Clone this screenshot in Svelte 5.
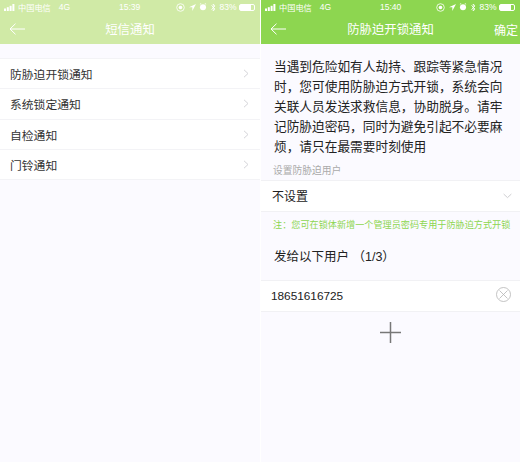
<script>
  const notices = ["防胁迫开锁通知", "系统锁定通知", "自检通知", "门铃通知"];
</script>

{#snippet status(time)}
  <div class="status">
    <div class="status-side">
      <svg width="11" height="7" viewBox="0 0 11 7" fill="#fff"><rect x="0" y="4.500" width="2" height="2.500" /><rect x="2.800" y="3.200" width="2" height="3.800" /><rect x="5.600" y="1.800" width="2" height="5.200" /><rect x="8.400" y="0" width="2" height="7" /></svg>
      <span class="carrier">中国电信</span>
      <span class="net">4G</span>
    </div>
    <span class="time">{time}</span>
    <div class="status-side right">
      <svg width="9" height="9" viewBox="0 0 9 9" fill="none" stroke="#fff" stroke-width=".8"><circle cx="4.500" cy="4.500" r="3.800" /><circle cx="4.500" cy="4.500" r="1.800" fill="#fff" stroke="none" /></svg>
      <svg width="7" height="7" viewBox="0 0 8 8"><path d="M8 0 0 3.600h3.800V8z" fill="#fff" /></svg>
      <svg width="8" height="8" viewBox="0 0 8 9"><circle cx="4" cy="4.700" r="3.400" fill="#fff" /><path d="M.5 1.500 2 .4M7.500 1.500 6 .4" stroke="#fff" fill="none" /></svg>
      <svg width="5" height="9" viewBox="0 0 5 9" fill="none" stroke="#fff" stroke-width=".8"><path d="M.4 2.400 4 6 2.200 8V1L4 3 .4 6.600" /></svg>
      <span class="battery-text">83%</span>
      <span class="battery"><span class="battery-level"></span></span>
    </div>
  </div>
{/snippet}

{#snippet back()}
  <svg class="back" width="16" height="12" viewBox="0 0 16 12" fill="none" stroke="#fff" stroke-width="1"><path d="M16 6H1M6.500.7 1 6l5.500 5.300" /></svg>
{/snippet}

<div class="page">
  <section class="screen left">
    <header class="head pale">
      {@render status("15:39")}
      <div class="nav">
        {@render back()}
        <span class="title">短信通知</span>
      </div>
    </header>
    <div class="body">
      <ul class="list">
        {#each notices as item}
          <li>
            <span>{item}</span>
            <svg width="6" height="9" viewBox="0 0 6 9" fill="none" stroke="#d4d4d8"><path d="m1 .8 4 3.700-4 3.700" /></svg>
          </li>
        {/each}
      </ul>
    </div>
  </section>

  <section class="screen right-screen">
    <header class="head">
      {@render status("15:40")}
      <div class="nav">
        {@render back()}
        <span class="title">防胁迫开锁通知</span>
        <span class="ok">确定</span>
      </div>
    </header>
    <div class="body">
      <p class="intro">当遇到危险如有人劫持、跟踪等紧急情况时，您可使用防胁迫方式开锁，系统会向关联人员发送求救信息，协助脱身。请牢记防胁迫密码，同时为避免引起不必要麻烦，请只在最需要时刻使用</p>
      <div class="label">设置防胁迫用户</div>
      <div class="row select">
        <span>不设置</span>
        <svg width="9" height="6" viewBox="0 0 10 6" fill="none" stroke="#c8c8cc"><path d="m.7.8 4.300 4 4.300-4" /></svg>
      </div>
      <div class="note">注：您可在锁体新增一个管理员密码专用于防胁迫方式开锁</div>
      <div class="send">发给以下用户 （1/3）</div>
      <div class="row phone">
        <span>18651616725</span>
        <svg width="15" height="15" viewBox="0 0 15 15" fill="none" stroke="#b5b5b5" stroke-width=".8"><circle cx="7.500" cy="7.500" r="7" /><path d="m3.500 3.500 8 8M11.500 3.500l-8 8" /></svg>
      </div>
      <div class="add">
        <svg width="21" height="21" viewBox="0 0 21 21" stroke="#777" stroke-width="1.500"><path d="M0 10.500h21M10.500 0v21" /></svg>
      </div>
    </div>
  </section>
</div>

<style>
  :global(body) {
    background: #fff;
  }
  .page {
    display: flex;
    width: 520px;
    height: 462px;
    gap: 1px;
    font-family: "Liberation Sans", "Noto Sans CJK SC", sans-serif;
    color: #222;
    overflow: hidden;
  }
  .screen {
    display: flex;
    flex-direction: column;
    min-width: 0;
  }
  .screen.left {
    width: 260px;
  }
  .right-screen {
    width: 259px;
  }
  .head {
    height: 44px;
    flex: none;
    background: #8dd650;
    color: #fff;
  }
  .head.pale {
    background: #d0eaa6;
  }
  .status {
    height: 14px;
    padding: 0 5px 0 4px;
    display: flex;
    justify-content: space-between;
    align-items: center;
    font-size: 8px;
    position: relative;
  }
  .status-side {
    display: flex;
    align-items: center;
    gap: 3px;
  }
  .status-side.right {
    gap: 3.500px;
  }
  .carrier {
    margin-right: 5px;
    font-size: 8.200px;
  }
  .net {
    font-size: 8.500px;
  }
  .time {
    position: absolute;
    left: 119px;
    font-size: 8.500px;
  }
  .battery-text {
    font-size: 8.500px;
    margin-right: -1px;
  }
  .battery {
    width: 16px;
    height: 7px;
    border: 1px solid #fff;
    border-radius: 2px;
    box-sizing: border-box;
    display: flex;
  }
  .battery-level {
    width: 80%;
    background: #fff;
  }
  .nav {
    height: 30px;
    display: flex;
    align-items: center;
    justify-content: center;
    position: relative;
    font-size: 12.400px;
  }
  .back {
    position: absolute;
    left: 9px;
    top: 9px;
  }
  .ok {
    position: absolute;
    right: 2px;
    font-size: 12px;
  }
  .body {
    flex: 1;
    background: #fbfaff;
    display: flex;
    flex-direction: column;
  }
  .list {
    list-style: none;
    margin: 14px 0 0;
    padding: 0;
    background: #fff;
    border-top: 1px solid #f3f3f6;
  }
  .list li {
    height: 30.300px;
    box-sizing: border-box;
    display: flex;
    align-items: center;
    justify-content: space-between;
    padding: 0 11px 0 10px;
    font-size: 11.800px;
    color: #333;
    border-bottom: 1px solid #f3f3f6;
  }
  .intro {
    margin: 0;
    padding: 13px 16px 6px 13px;
    font-size: 12.700px;
    line-height: 20px;
  }
  .label {
    font-size: 9.750px;
    color: #aaa;
    padding-left: 12px;
    height: 17px;
    line-height: 16px;
  }
  .row {
    background: #fff;
    display: flex;
    align-items: center;
    justify-content: space-between;
    box-sizing: border-box;
    border-top: 1px solid #f1f1f4;
    border-bottom: 1px solid #f1f1f4;
  }
  .select {
    height: 32px;
    padding: 0 8px 1px 11px;
    font-size: 12px;
  }
  .note {
    font-size: 9.150px;
    color: #8dd650;
    padding-left: 12px;
    line-height: 26px;
    height: 26px;
    white-space: nowrap;
  }
  .send {
    font-size: 12.500px;
    padding-left: 13px;
    height: 42px;
    line-height: 38px;
  }
  .phone {
    height: 32px;
    padding: 0 9px 0 10px;
    font-size: 11.800px;
  }
  .phone svg {
    margin-bottom: 4px;
  }
  .add {
    display: flex;
    justify-content: center;
    padding-top: 10px;
  }
</style>
